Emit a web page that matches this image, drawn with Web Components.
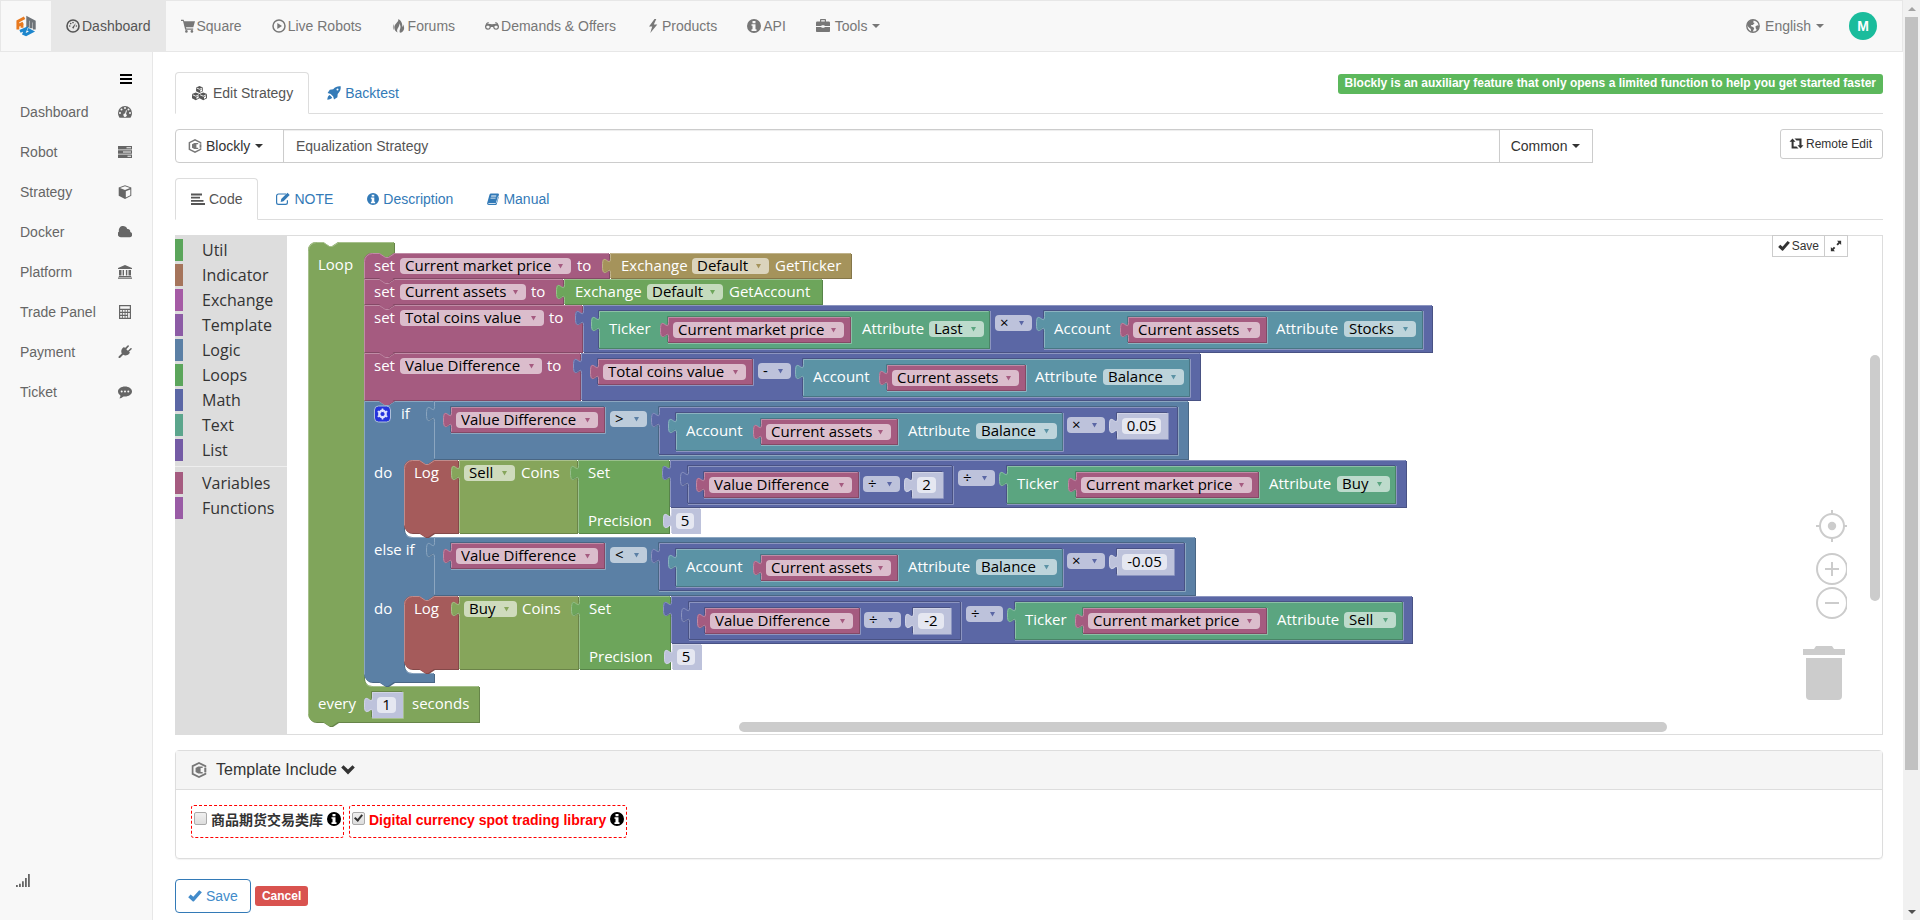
<!DOCTYPE html>
<html lang="en">
<head>
<meta charset="utf-8">
<title>Edit Strategy - Equalization Strategy</title>
<style>
  html, body { margin: 0; min-height: 100vh; background: #fff; }
  body { font: 14px/20px "Liberation Sans", Arial, "Noto Sans CJK SC", sans-serif; color: #333; }
</style>
</head>
<body>
<strategy-app></strategy-app>
<script>
const define = (name, html, setup) => {
  const template = document.createElement('template');
  template.innerHTML = html;
  customElements.define(name, class extends HTMLElement {
    constructor() {
      super();
      this.attachShadow({ mode: 'open' }).append(template.content.cloneNode(true));
    }
    connectedCallback() {
      if (setup && !this.ready) { this.ready = true; setup(this, this.shadowRoot); }
    }
  });
};

/* ---------- icons, all on a 14 x 14 grid ---------- */
const ICONS = {
  logo: '<g fill="none" stroke-width="2"><path stroke="#e8791e" d="M1.300 9.500V3.800L6 1.200M1.300 6.900L5 4.900M4.200 8.200V6"/><path stroke="#6f7479" d="M8.200 8V1.500L12.800 4V9.400M10.500 8.600V3.500"/><path stroke="#1d86cd" d="M2.800 10.800L6.900 9l-1.400 3.400 1.500.6 4.200-2.200-3-1.600"/></g>',
  gauge: '<circle cx="7" cy="7" r="6" fill="none" stroke="currentColor" stroke-width="1.600"/><path d="M6.200 8.500L9.800 4 7.800 9.200A1 1 0 0 1 6.200 8.500Z"/><circle cx="3.700" cy="7" r=".8"/><circle cx="4.700" cy="4.600" r=".8"/><circle cx="7" cy="3.600" r=".8"/><circle cx="10.400" cy="7" r=".8"/>',
  cart: '<path d="M0 .8h2.600l.6 1.500H14l-1.700 6H5l.3 1.200h6.900v1.300H4.200L2 2.100H0Z"/><circle cx="5.400" cy="12.400" r="1.300"/><circle cx="10.900" cy="12.400" r="1.300"/>',
  play: '<circle cx="7" cy="7" r="6" fill="none" stroke="currentColor" stroke-width="1.500"/><path d="M5.300 3.900L10 7l-4.700 3.100Z"/>',
  fire: '<path d="M6.300 0C7 3.200 2.200 4.600 2.300 8.600c0 2.600 1.600 4.400 3.400 5-1.200-2.200-.6-3.600.6-5.200 1.100-1.500 1.200-2.600.8-4.100 1.800 2.300 1.600 4.200.9 6-.5 1.300-.6 2.300 0 3.500C12 13 13.300 8.800 11 5.400c.1 1.200-.1 1.900-.7 2.600C10.500 4.800 9.600 1.600 6.300 0Z"/><path d="M2 5C.5 7 .6 9.500 2 11.200 1.400 9 1.500 7 2 5Z"/>',
  glasses: '<path d="M1.300 4.200C2 3.200 3 3 4 3.400l-.3.900c-.7-.2-1-.1-1.300.4 1.500-.1 3 .1 4.600.6 1.600-.5 3.100-.7 4.600-.6-.3-.5-.6-.6-1.300-.4L10 3.400c1-.4 2-.2 2.700.8L14 7c.1 2.300-.8 3.700-2.900 3.700C9.200 10.700 8.300 9.500 8.100 8H5.900C5.700 9.500 4.800 10.700 2.900 10.700.8 10.700-.1 9.300 0 7ZM3 6.700c-1.200 0-1.700.5-1.700 1.200S1.900 9.400 2.900 9.400 4.600 8.800 4.600 7.900 4.100 6.700 3 6.700Zm8 0c-1.100 0-1.600.4-1.600 1.200s.6 1.500 1.700 1.500 1.600-.7 1.600-1.500S12.200 6.700 11 6.700Z" fill-rule="evenodd"/>',
  bolt: '<path d="M8.500 0L3 7.600h3.200L4.300 14l7-8.600H7.800L10.300 0Z"/>',
  info: '<path fill-rule="evenodd" d="M7 0a7 7 0 1 1 0 14A7 7 0 0 1 7 0ZM5.500 2v2.200h3V2ZM4.500 5.300v1.500h1v3.500h-1v1.600h5v-1.600h-1v-5Z"/>',
  briefcase: '<path fill-rule="evenodd" d="M4 2.500V.8A.8.8 0 0 1 4.800 0h4.400a.8.8 0 0 1 .8.800v1.700h2.800A1.200 1.200 0 0 1 14 3.700V7H8.500v-.8h-3V7H0V3.700a1.200 1.200 0 0 1 1.200-1.200Zm1.200 0h3.600v-1.300H5.200ZM0 8h5.500v.8h3V8H14v4.200a.8.8 0 0 1-.8.800H.8a.8.8 0 0 1-.8-.8Z"/>',
  globe: '<circle cx="7" cy="7" r="6.200" fill="none" stroke="currentColor" stroke-width="1.400"/><path d="M2 3.200L6 .8l2 .8-1 1.700 1.600.8L6.900 6 5 5.900l.4 1.500 1.800.6 1 1.500L6.500 13 5 12.700 4.800 10 2.400 8 1 6ZM9.500 7.200l2-.9 1.800.8-.8 3L11 11.600 9.700 9.300Z"/>',
  bars: '<path d="M1 2h12v2H1zM1 6h12v2H1zM1 10h12v2H1z"/>',
  tachometer: '<path fill-rule="evenodd" d="M7 1a7 7 0 0 1 7 7c0 1.600-.5 3-1.200 4.300-.2.400-.5.500-.8.500H2c-.3 0-.6-.1-.8-.5A8 8 0 0 1 0 8a7 7 0 0 1 7-7ZM2 7a1 1 0 1 0 0 2 1 1 0 0 0 0-2Zm1.500-3.500a1 1 0 1 0 0 2 1 1 0 0 0 0-2ZM7 2a1 1 0 1 0 0 2 1 1 0 0 0 0-2Zm3.500 1.500a1 1 0 1 0 0 2 1 1 0 0 0 0-2ZM12 7a1 1 0 1 0 0 2 1 1 0 0 0 0-2ZM8 5.200L7 8.600a1.600 1.600 0 1 0 1 .3l1-3.400Z"/>',
  server: '<path fill-rule="evenodd" d="M0 1h14v3.400H0ZM8.500 2.200v1H13v-1ZM0 5.300h14v3.400H0ZM5 6.500v1h8v-1ZM0 9.600h14V13H0Zm9.500 1.200v1H13v-1Z"/>',
  cube: '<path fill-rule="evenodd" d="M7 .3L13.300 2.600v8.200L7 13.900.7 10.800V2.600ZM7 1.200L2 3 7 4.900 12 3Z"/><path d="M7.800 6.300l4.500-1.700v5.600L7.800 12.400Z" fill="#f8f8f8"/>',
  cloud: '<path d="M3 12.300A3.200 3.200 0 0 1 1 6.500 4.300 4.300 0 0 1 9.300 4a2.400 2.400 0 0 1 2.900 2.900A2.800 2.800 0 0 1 12 12.300Z"/>',
  bank: '<path d="M7 0l7 3v1H0V3ZM1 5h2.500v5.500H1zM4.600 5H6v5.500H4.600zM7.900 5h1.400v5.500H7.900zM10.500 5H13v5.500h-2.500zM.8 11h12.400v1H.8zM0 12.500h14v1.300H0z"/>',
  calculator: '<path fill-rule="evenodd" d="M1 0h12v14H1ZM2.200 1.200v2.600h9.600V1.200ZM2.200 5v1.800h1.700V5Zm2.600 0v1.800h1.800V5Zm2.700 0v1.800h1.700V5Zm2.600 0v1.800h1.700V5ZM2.200 8v1.800h1.700V8Zm2.600 0v1.800h1.800V8Zm2.700 0v1.800h1.700V8ZM2.200 11v1.800h1.700V11Zm2.600 0v1.800h1.800V11Zm2.700 0v1.800h1.700V11Zm2.600-3v4.800h1.700V8Z"/>',
  plug: '<path d="M13.600 4.200L11 6.800l1 1-1.200 1.200C9.400 10.600 7 10.900 5.200 9.800L2 13H.6v-1.500l3.200-3.100C2.800 6.700 3.300 4.500 4.700 3L6 2l1 1L9.600.4c1-.6 1.700.3 1.200 1.100L8.300 4.200l1.600 1.600 2.600-2.500c.9-.5 1.700.1 1.100.9Z"/>',
  comment: '<path fill-rule="evenodd" d="M7 1.500c3.900 0 7 2.200 7 5s-3.100 5-7 5l-1.500-.1C4 12.700 2.600 13.200 1.200 13.300c.8-.8 1.200-1.600 1.200-2.900C.9 9.400 0 8 0 6.500c0-2.800 3.100-5 7-5ZM3.700 5.500a1 1 0 1 0 0 2 1 1 0 0 0 0-2Zm3.300 0a1 1 0 1 0 0 2 1 1 0 0 0 0-2Zm3.300 0a1 1 0 1 0 0 2 1 1 0 0 0 0-2Z"/>',
  cubes: '<path d="M7 0L10.200 1.300V5L7 6.500 3.800 5V1.300ZM3.500 6L7 7.500v4L3.500 13.300 0 11.500v-4ZM10.500 6L14 7.500v4l-3.500 1.800L7 11.500v-4Z"/><path fill="none" stroke="#fff" stroke-width=".8" d="M4.300 1.900L7 3l2.700-1.100M.6 8.200l2.900 1.300 3-1.300M7.500 8.200l3 1.300 2.900-1.300"/><path fill="#fff" d="M7.700 3.700l1.800-.8v1.700l-1.800.9ZM4.200 10.200L6.200 9.300v1.700l-2 1.100ZM11.200 10.200l1.900-.9v1.700l-1.900 1.100Z"/>',
  rocket: '<path fill-rule="evenodd" d="M13.700.3c.3 3-.4 5.200-3 7.700l-.3 3.300L7 13.400l-.8-3L3.700 7.900.6 7l2.200-3.300 3.400-.4C8.600.6 10.700 0 13.700.3ZM10.500 2.500a1 1 0 1 0 0 2 1 1 0 0 0 0-2ZM2.700 9l2.500 2.400c-.8 1.500-2.500 2-4.900 2.300C.5 11.500 1 9.700 2.700 9Z"/>',
  align: '<path d="M0 1.500h11v1.900H0zM0 4.700h9v1.900H0zM0 7.900h12.500v1.900H0zM0 11.100h14V13H0z"/>',
  edit: '<path fill="none" stroke="currentColor" stroke-width="1.200" d="M10 2H2.500A1.900 1.900 0 0 0 .6 3.900v6.600a1.900 1.900 0 0 0 1.900 1.900h7a1.900 1.900 0 0 0 1.900-1.900V8.200"/><path d="M11.500.7L13.700 3 7.500 9.300l-2.800.6.5-2.800Z"/>',
  book: '<path fill-rule="evenodd" d="M4.200.5h8.600c.9.100 1.300.8 1.100 1.600l-2.600 8.700c-.3.900-.9 1.200-1.600 1.200H2c-.6 0-.6.900.2.900H10l2.900-9.500c.8.300 1 .7.800 1.500L11.300 13c-.3.700-.8 1-1.500 1H2C.7 14-.2 12.900.2 11.700L2.900 2.100C3.100 1.200 3.600.7 4.200.5ZM5 3l-.3 1h5.900l.3-1Zm-.7 2.400L4 6.400h5.900l.3-1Z"/>',
  hex: '<path fill="none" stroke="currentColor" stroke-width="1.500" d="M12.600 4.800V3.600L7 .9 1.400 3.600v6.800L7 13.100l5.600-2.700V9.200"/><path d="M10.200 4H6.300L4 5.300v3.400L6.300 10h3.900V8.700H8.400V5.300h1.800ZM11.600 5.300h1.800v3.400h-1.800z"/>',
  remote: '<path d="M3 1.500l3 3.300H4.100v4.700H7L9 11.500H2.100V4.800H0Zm2 0h7v6.700H14l-3 3.300L8 8.200h1.900V3.500H7Z"/>',
  check: '<path d="M13.900 3.300L6 12.200a1 1 0 0 1-1.400 0L.2 8.200l2.400-2.700 2.700 2.300L11.200 1.200Z"/>',
  resize: '<path d="M8.200 1H13v4.800l-1.600-1.600-2.300 2.300-1.600-1.600 2.300-2.300ZM5.800 13H1V8.200l1.600 1.600 2-2 1.600 1.600-2 2Z"/>',
  chevron: '<path d="M.2 4.600L2.500 2.200 7 6.600l4.500-4.400 2.300 2.400L7 11.600Z"/>',
  signal: '<path d="M0 11h1.800v2H0zM3 9.700h1.800V13H3zM6 7.300h1.800V13H6zM9 4h1.800v9H9zM12 0h1.800v13H12z"/>'
};
define('ui-icon', `<style>
  :host { display: inline-block; flex: none; width: 14px; height: 14px; }
  svg { display: block; width: 100%; height: 100%; fill: currentColor; }
</style><svg viewBox="0 0 14 14" aria-hidden="true"></svg>`, (el, root) => {
  root.querySelector('svg').innerHTML = ICONS[el.getAttribute('name')];
});

define('ui-caret', `<style>
  :host { display: inline-block; border: 4px solid transparent; border-top-color: currentColor; border-bottom: 0; }
</style>`);

/* ---------- top bar ---------- */
define('app-header', `<style>
  :host { display: flex; height: 50px; border: 1px solid #e7e7e7; background: #f8f8f8; color: #777; }
  nav { display: flex; flex: 1; }
  a { display: flex; align-items: center; gap: 2px; padding: 0 15px; color: inherit; text-decoration: none; }
  a.brand { padding: 0 15px; }
  a.brand ui-icon { width: 20px; height: 22px; }
  a.active { background: #e7e7e7; color: #555; }
  a.menu { gap: 5px; }
  .right { display: flex; align-items: center; gap: 10px; padding-right: 25px; }
  .avatar { display: grid; place-items: center; width: 28px; height: 28px; border-radius: 50%;
    background: #1abc9c; color: #fff; font-weight: bold; }
</style>
<nav>
  <a class="brand" href="#home" aria-label="Home"><ui-icon name="logo"></ui-icon></a>
  <a class="active" href="#dashboard"><ui-icon name="gauge"></ui-icon>Dashboard</a>
  <a href="#square"><ui-icon name="cart"></ui-icon>Square</a>
  <a href="#live"><ui-icon name="play"></ui-icon>Live Robots</a>
  <a href="#forums"><ui-icon name="fire"></ui-icon>Forums</a>
  <a href="#demands"><ui-icon name="glasses"></ui-icon>Demands &amp; Offers</a>
  <a href="#products"><ui-icon name="bolt"></ui-icon>Products</a>
  <a href="#api"><ui-icon name="info"></ui-icon>API</a>
  <a class="menu" href="#tools"><ui-icon name="briefcase"></ui-icon>Tools<ui-caret></ui-caret></a>
</nav>
<div class="right">
  <a class="menu" href="#language"><ui-icon name="globe"></ui-icon>English<ui-caret></ui-caret></a>
  <div class="avatar">M</div>
</div>`);

/* ---------- left menu ---------- */
define('side-menu', `<style>
  :host { display: flex; flex-direction: column; box-sizing: border-box; width: 153px; background: #f8f8f8;
    border-right: 1px solid #e7e7e7; color: #666; }
  button { align-self: flex-end; display: flex; margin: 20px 19px 6px; padding: 0; border: 0; background: none; color: #000; }
  a { display: flex; align-items: center; justify-content: space-between; height: 40px; padding: 0 20px;
    color: inherit; text-decoration: none; }
  .signal { margin: auto 0 32px 16px; }
</style>
<button type="button" aria-label="Toggle menu"><ui-icon name="bars"></ui-icon></button>
<a href="#dashboard">Dashboard<ui-icon name="tachometer"></ui-icon></a>
<a href="#robot">Robot<ui-icon name="server"></ui-icon></a>
<a href="#strategy">Strategy<ui-icon name="cube"></ui-icon></a>
<a href="#docker">Docker<ui-icon name="cloud"></ui-icon></a>
<a href="#platform">Platform<ui-icon name="bank"></ui-icon></a>
<a href="#trade">Trade Panel<ui-icon name="calculator"></ui-icon></a>
<a href="#payment">Payment<ui-icon name="plug"></ui-icon></a>
<a href="#ticket">Ticket<ui-icon name="comment"></ui-icon></a>
<ui-icon class="signal" name="signal"></ui-icon>`);

/* ---------- tabs ---------- */
define('tab-bar', `<style>
  :host { display: flex; justify-content: space-between; align-items: flex-start; height: 41px;
    border-bottom: 1px solid #ddd; }
  .tabs { display: flex; gap: 2px; }
</style><div class="tabs"><slot></slot></div><slot name="end"></slot>`);
define('tab-link', `<style>
  :host { display: block; }
  a { display: flex; align-items: center; gap: 4px; box-sizing: border-box; height: 42px; padding: 0 15px;
    border: 1px solid transparent; border-radius: 4px 4px 0 0; color: #337ab7; text-decoration: none; }
  :host([active]) a { border-color: #ddd; border-bottom-color: #fff; background: #fff; color: #555; }
  :host([wide]) ui-icon { width: 17px; height: 15px; }
  :host([wide]) a { gap: 5px; }
  :host([narrow]) ui-icon { width: 12px; }
</style><a href="#tab"><ui-icon></ui-icon><slot></slot></a>`, (el, root) => {
  const icon = document.createElement('ui-icon');
  icon.setAttribute('name', el.getAttribute('icon'));
  root.querySelector('ui-icon').replaceWith(icon);
});

define('text-badge', `<style>
  :host { display: block; padding: 0 7px; height: 20px; border-radius: 3px; background: #5cb85c; color: #fff;
    font: bold 12px/18px "Liberation Sans", Arial, sans-serif; }
</style><slot></slot>`);

/* ---------- name, language and category of the strategy ---------- */
define('strategy-form', `<style>
  :host { display: flex; justify-content: space-between; align-items: flex-start; }
  .group { display: flex; flex: 0 0 83%; height: 34px; }
  .pick { position: relative; display: flex; align-items: center; box-sizing: border-box; border: 1px solid #ccc; color: #333; }
  .pick.type { width: 109px; border-radius: 4px 0 0 4px; }
  .pick.kind { width: 94px; }
  .pick ui-icon { position: absolute; left: 12px; color: #777; pointer-events: none; }
  .pick ui-caret { position: absolute; pointer-events: none; }
  .type ui-caret { right: 20px; }
  .kind ui-caret { right: 12px; }
  select { appearance: none; width: 100%; height: 32px; border: 0; margin: 0; background: none; color: inherit; font: inherit; }
  .type select { padding: 0 0 0 30px; }
  .kind select { padding: 0 0 0 11px; }
  input { flex: 1; min-width: 0; box-sizing: border-box; margin: 0 -1px; padding: 0 12px; border: 1px solid #ccc;
    box-shadow: inset 0 1px 1px #00000013; color: #555; font: inherit; }
  button { display: flex; align-items: center; gap: 2px; height: 30px; padding: 0 10px 0 8px; border: 1px solid #ccc;
    border-radius: 3px; background: #fff; color: #333; font: 12px/18px "Liberation Sans", Arial, sans-serif; }
  button ui-icon { width: 15px; }
</style>
<div class="group">
  <div class="pick type"><ui-icon name="hex"></ui-icon>
    <select aria-label="Strategy type"><option>Blockly</option></select><ui-caret></ui-caret></div>
  <input aria-label="Strategy name" value="Equalization Strategy">
  <div class="pick kind"><select aria-label="Category"><option>Common</option></select><ui-caret></ui-caret></div>
</div>
<button type="button"><ui-icon name="remote"></ui-icon>Remote Edit</button>`);

/* ---------- block categories ---------- */
define('block-toolbox', `<style>
  :host { display: block; box-sizing: border-box; width: 112px; padding-top: 4px; background: #ddd;
    font: 16px/22px "Open Sans", "Noto Sans", sans-serif; color: #333; }
  ul { margin: 0; padding: 0; list-style: none; }
  li { height: 22px; margin-bottom: 3px; padding-left: 19px; border-left: 8px solid var(--hue); }
  hr { height: 0; margin: 5px 0; border: 0; border-top: 1px solid #eee; }
</style>
<ul>
  <li style="--hue:#5ba55b">Util</li><li style="--hue:#a5745b">Indicator</li><li style="--hue:#a55ba5">Exchange</li>
  <li style="--hue:#8c5ba5">Template</li><li style="--hue:#5b80a5">Logic</li><li style="--hue:#5ba55b">Loops</li>
  <li style="--hue:#5b67a5">Math</li><li style="--hue:#5ba58c">Text</li><li style="--hue:#745ba5">List</li>
</ul>
<hr>
<ul><li style="--hue:#a55b80">Variables</li><li style="--hue:#995ba5">Functions</li></ul>`);

/* ---------- the block canvas ---------- */
const C = { loop: '#80a55b', variable: '#a55b80', gold: '#a5935b', green: '#6da55b', math: '#5b67a5', ticker: '#5ba580',
  account: '#5b93a5', logic: '#5b80a5', log: '#a55b5b', coins: '#86a55b', number: '#bdc2db' };
const mix = (hex, to, k) => '#' + [1, 3, 5].map(i => {
  const v = parseInt(hex.slice(i, i + 2), 16);
  return Math.round(v + (to - v) * k).toString(16).padStart(2, '0');
}).join('');
const light = c => mix(c, 255, .3);
/* constant blocks have no shaded edge */
const dark = c => c === C.number ? c : mix(c, 0, .2);
const NOTCH = 'l6,4 3,0 6,-4', NOTCH_BACK = 'l-6,4 -3,0 -6,-4', TAB_UP = 'c0,-10 -8,8 -8,-7.5 s8,2.5 8,-7.5';

/* canvas coordinates of the top left corner of the visible area */
const VIEW = { x: 176, y: 236 };

class Program {
  constructor() { this.shapes = ''; this.fields = ''; }
  draw(d, edge, c) {
    this.shapes += `<path d="${d}" fill="${dark(c)}" transform="translate(1,1)"/><path d="${d}" fill="${c}"/>` +
      `<path d="${edge}" fill="none" stroke="${light(c)}" transform="translate(.5,.5)"/>`;
  }
  /* a block that plugs into a value input; "into" is the colour of the block around it */
  value(x, y, r, b, c, into) {
    if (into) this.shapes += `<path d="M${x - .5},${b}V${y - .5}H${r}" fill="none" stroke="${dark(into)}"/>` +
      `<path d="M${x},${b + 1.500}H${r + 1.500}V${y}" fill="none" stroke="${light(into)}"/>`;
    const left = `V${y + 20}${TAB_UP}V${y}`;
    this.draw(`M${x},${b}${left}H${r}V${b}Z`, `M${x},${b - 1}${left}H${r - 1}`, c);
    if (into) this.shapes += `<path d="M${x},${b + .5}H${r + .5}V${y}" fill="none" stroke="${dark(c)}"/>`;
  }
  statement(x, y, r, b, c, round) {
    const top = (round ? `V${y + 8}a8,8 0 0 1 8,-8` : `V${y}`) + `H${x + 15}${NOTCH}`;
    const bottom = `H${x + 30}${NOTCH_BACK}` + (round === 'both' ? `H${x + 8}a8,8 0 0 1 -8,-8` : `H${x}`);
    const low = round === 'both' ? b - 8 : b;
    this.draw(`M${x},${low}${top}H${r}V${b}${bottom}Z`, `M${x},${low}${top}H${r - 1}`, c);
  }
  box(kind, x, y, w, inner) {
    this.fields += `<${kind} style="left:${x - VIEW.x}px;top:${y - 5 - VIEW.y}px${w ? `;width:${w}px` : ''}"${inner}`;
  }
  text(x, y, s) { this.box('span', x, y, 0, `>${s}</span>`); }
  select(x, y, r, s, c) {
    this.shapes += `<rect x="${x}" y="${y}" width="${r - x}" height="16" rx="4" fill="${mix(c, 255, .6)}"/>` +
      `<path d="M${r - 13},${y + 6}h5l-2.500,4.500z" fill="${c}"/>`;
    this.box('select', x, y, r - x, ` aria-label="${s}"><option>${s}</option></select>`);
  }
  variable(x, y, r, s, into) {
    this.value(x, y, r, y + 25, C.variable, into);
    this.select(x + 5, y + 5, r - 6, s, C.variable);
  }
  number(x, y, r, s, into) {
    this.value(x, y, r, y + 25, C.number, into);
    this.shapes += `<rect x="${x + 5}" y="${y + 5}" width="${r - x - 11}" height="16" rx="4" fill="#e5e7f1"/>`;
    this.box('input', x + 5, y + 5, r - x - 11, ` aria-label="Number" value="${s}">`);
  }
  /* Ticker / Account reader: label, variable, attribute */
  reader(x, y, r, c, name, vx, vr, variable, ax, fx, fr, attr) {
    this.value(x, y, r, y + 37, c, C.math);
    this.text(x + 10, y + 10, name);
    this.variable(vx, y + 6, vr, variable, c);
    this.text(ax, y + 10, 'Attribute');
    this.select(fx, y + 10, fr, attr, c);
  }
}

function buildProgram() {
  const p = new Program();
  p.draw(`M308,250a8,8 0 0 1 8,-8H323${NOTCH}H394V253${NOTCH_BACK}h-7a8,8 0 0 0 -8,8V678a8,8 0 0 0 8,8H479V722H338${NOTCH_BACK}H316a8,8 0 0 1 -8,-8Z`,
    `M308,714V250a8,8 0 0 1 8,-8H323${NOTCH}H393M366,684a8,8 0 0 0 6,2H478`, C.loop);
  p.text(318, 257, 'Loop');
  p.text(318, 696, 'every');
  p.number(372, 692, 402, '1', C.loop);
  p.text(412, 696, 'seconds');

  p.draw(`M364,401H379${NOTCH}H434V460${NOTCH_BACK}h-7a8,8 0 0 0 -8,8V529a8,8 0 0 0 8,8H434V596${NOTCH_BACK}h-7a8,8 0 0 0 -8,8V665a8,8 0 0 0 8,8H434V682H394${NOTCH_BACK}H372a8,8 0 0 1 -8,-8Z`,
    `M364,674V401H379${NOTCH}H433M406,535a8,8 0 0 0 6,2H434M406,671a8,8 0 0 0 6,2H433`, C.logic);

  p.statement(364, 353, 580, 400, C.variable);
  p.statement(364, 305, 582, 352, C.variable);
  p.statement(364, 279, 563, 304, C.variable);
  p.statement(364, 253, 609, 278, C.variable, 'top');
  const notchFill = (x, y, c) => { p.shapes += `<path d="M${x + 15},${y}${NOTCH}z" fill="${c}"/>`; };
  [279, 305, 353, 401].forEach(y => notchFill(364, y, C.variable));

  p.text(374, 258, 'set'); p.select(400, 258, 571, 'Current market price', C.variable); p.text(577, 258, 'to');
  p.value(610, 253, 851, 278, C.gold);
  p.text(621, 258, 'Exchange'); p.select(692, 258, 769, 'Default', C.gold); p.text(775, 258, 'GetTicker');

  p.text(374, 284, 'set'); p.select(400, 284, 526, 'Current assets', C.variable); p.text(531, 284, 'to');
  p.value(564, 279, 822, 304, C.green);
  p.text(575, 284, 'Exchange'); p.select(647, 284, 723, 'Default', C.green); p.text(729, 284, 'GetAccount');

  p.text(374, 310, 'set'); p.select(400, 310, 544, 'Total coins value', C.variable); p.text(549, 310, 'to');
  p.value(583, 305, 1432, 352, C.math);
  p.reader(599, 311, 989, C.ticker, 'Ticker', 668, 850, 'Current market price', 862, 929, 984, 'Last');
  p.select(995, 315, 1032, '×', C.math);
  p.reader(1044, 311, 1422, C.account, 'Account', 1128, 1266, 'Current assets', 1276, 1344, 1416, 'Stocks');

  p.text(374, 358, 'set'); p.select(400, 358, 542, 'Value Difference', C.variable); p.text(547, 358, 'to');
  p.value(581, 353, 1200, 400, C.math);
  p.variable(598, 359, 752, 'Total coins value', C.math);
  p.select(758, 363, 791, '-', C.math);
  p.reader(803, 359, 1189, C.account, 'Account', 887, 1025, 'Current assets', 1035, 1103, 1184, 'Balance');

  p.shapes += `<rect x="374.500" y="406" width="16" height="16" rx="4" fill="#2533dc" stroke="#aebfd9"/>
    <circle cx="382.500" cy="414" r="3.400" fill="none" stroke="#dfe3ff" stroke-width="2"/>
    <path d="M382.500 408.500v11M377.700 411.200l9.600 5.600M377.700 416.800l9.600-5.600" stroke="#dfe3ff" stroke-width="1.600"/>
    <circle cx="382.500" cy="414" r="2" fill="#2533dc"/>`;

  const branches = [
    { y: 401, word: 'if', wx: 401, op: '&gt;', right: 1188, mr: 1177, nr: 1167, n: '0.05',
      side: 'Sell', sr: 515, cx: 521, set: 579, mathR: 1406, inR: 952, d: 0, two: '2', tx: 912, tr: 942,
      dx: 958, rx: 1007, rr: 1395, vx: 1076, vr: 1258, ax: 1269, fx: 1337, fr: 1390, attr: 'Buy' },
    { y: 537, word: 'else if', wx: 374, op: '&lt;', right: 1195, mr: 1184, nr: 1173, n: '-0.05',
      side: 'Buy', sr: 517, cx: 522, set: 580, mathR: 1412, inR: 960, d: 1, two: '-2', tx: 913, tr: 950,
      dx: 966, rx: 1015, rr: 1402, vx: 1083, vr: 1266, ax: 1277, fx: 1344, fr: 1396, attr: 'Sell' }
  ];
  for (const b of branches) {
    const y = b.y, m = y + 59, s = b.set, e = 671 + b.d;
    p.text(b.wx, y + 5, b.word);
    p.value(434, y, b.right, y + 58, C.logic);
    p.variable(451, y + 6, 604, 'Value Difference', C.logic);
    p.select(610, y + 10, 647, b.op, C.logic);
    p.value(659, y + 6, b.mr, y + 53, C.math, C.logic);
    p.reader(676, y + 12, 1062, C.account, 'Account', 761, 897, 'Current assets', 908, 976, 1057, 'Balance');
    p.select(1067, y + 16, 1105, '×', C.math);
    p.number(1117, y + 12, b.nr, b.n, C.math);

    p.text(374, m + 5, 'do');
    p.statement(404, m, 458, m + 73, C.log, 'both');
    p.text(414, m + 5, 'Log');
    p.value(459, m, s - 2, m + 73, C.coins);
    p.select(464, m + 5, b.sr, b.side, C.coins);
    p.text(b.cx, m + 5, 'Coins');
    p.value(s - 1, m, e - 2, m + 73, C.green);
    p.text(s + 9, m + 5, 'Set');
    p.text(s + 9, m + 53, 'Precision');
    p.value(e - 1, m, b.mathR, m + 47, C.math);
    p.value(e + 17, m + 6, b.inR, m + 43, C.math, C.math);
    p.variable(704 + b.d, m + 12, 858 + b.d, 'Value Difference', C.math);
    p.select(863 + b.d, m + 16, 900 + b.d, '÷', C.math);
    p.number(b.tx, m + 12, b.tr, b.two, C.math);
    p.select(b.dx, m + 10, b.dx + 37, '÷', C.math);
    p.reader(b.rx, m + 6, b.rr, C.ticker, 'Ticker', b.vx, b.vr, 'Current market price', b.ax, b.fx, b.fr, b.attr);
    p.number(e, m + 48, e + 29, '5');
  }
  notchFill(364, 401, C.variable);
  return p;
}

define('block-canvas', `<style>
  :host { display: block; position: relative; overflow: hidden; font: 15px/24px "Open Sans", "Noto Sans", sans-serif; }
  svg { position: absolute; left: 0; top: 0; width: 100%; height: 100%; }
  span, select, input { position: absolute; box-sizing: border-box; height: 24px; margin: 0; border: 0; padding: 0;
    background: none; font: inherit; white-space: pre; }
  span { color: #fff; }
  select { appearance: none; padding-left: 5px; color: #000; }
  input { color: #000; text-align: center; }
</style><svg aria-hidden="true"></svg><div id="fields"></div>`, (el, root) => {
  const p = buildProgram();
  root.querySelector('svg').innerHTML = `<g transform="translate(${-VIEW.x},${-VIEW.y})">${p.shapes}</g>`;
  root.getElementById('fields').innerHTML = p.fields;
});

define('block-workspace', `<style>
  :host { display: block; position: relative; box-sizing: border-box; height: 500px; border: 1px solid #ddd; }
  block-canvas { height: 100%; }
  block-toolbox { position: absolute; left: -1px; top: -1px; bottom: -1px; }
  .tools { position: absolute; right: 34px; top: -1px; display: flex; }
  .tools button { display: flex; align-items: center; gap: 2px; height: 22px; margin-left: -1px; padding: 0 5px; border: 1px solid #ccc;
    background: #fff; color: #333; font: 12px/18px "Liberation Sans", Arial, sans-serif; }
  .tools ui-icon { width: 12px; height: 12px; }
  .bar { position: absolute; border-radius: 5px; background: #ccc; }
  .bar.h { left: 563px; right: 215px; bottom: 2px; height: 10px; }
  .bar.v { right: 2px; top: 119px; width: 10px; height: 246px; }
  .view { position: absolute; right: 35px; bottom: 33px; width: 48px; }
</style>
<block-canvas></block-canvas>
<block-toolbox></block-toolbox>
<div class="tools">
  <button type="button"><ui-icon name="check"></ui-icon>Save</button>
  <button type="button" aria-label="Full screen"><ui-icon name="resize"></ui-icon></button>
</div>
<svg class="view" viewBox="0 0 48 192" fill="none" stroke="#ccc" stroke-width="2" aria-hidden="true">
  <circle cx="33" cy="17" r="12"/><circle cx="33" cy="17" r="4.200" fill="#ccc" stroke="none"/>
  <path d="M33 1v4M33 29v4M17 17h4M45 17h4"/>
  <circle cx="33" cy="60" r="15"/><path d="M26 60h14M33 53v14"/>
  <circle cx="33" cy="94" r="15"/><path d="M26 94h14"/>
  <g fill="#ccc" stroke="none"><path d="M4 140h11l2-3h16l2 3h11v6H4zM7 149h36v38a4 4 0 0 1-4 4H11a4 4 0 0 1-4-4z"/></g>
</svg>
<div class="bar h"></div><div class="bar v"></div>`);

/* ---------- templates ---------- */
define('template-option', `<style>
  :host { display: flex; align-items: flex-start; box-sizing: border-box; height: 33px; padding: 4px 2px; border: 1px dashed red; border-radius: 3px;
    font-weight: bold; }
  label { display: flex; align-items: flex-start; gap: 4px; line-height: 20px; }
  input { appearance: none; position: relative; box-sizing: border-box; width: 13px; height: 13px; margin: 2px 0 0; border: 1px solid #aaa; border-radius: 2px;
    background: linear-gradient(#f0f0f0, #ddd); }
  input:checked::before { content: ""; position: absolute; left: 3px; top: 0; width: 3px; height: 6px;
    border: solid #333; border-width: 0 2px 2px 0; transform: rotate(40deg); }
  ui-icon { margin: 2px 0 0 4px; color: #000; }
</style><label><input type="checkbox"><slot></slot></label><ui-icon name="info"></ui-icon>`, (el, root) => {
  root.querySelector('input').checked = el.hasAttribute('checked');
});

define('template-panel', `<style>
  :host { display: block; border: 1px solid #ddd; border-radius: 4px; box-shadow: 0 1px 1px #0000000d; }
  header { display: flex; align-items: center; height: 38px; padding: 0 15px; border-bottom: 1px solid #ddd; background: #f5f5f5; }
  header ui-icon { width: 16px; height: 16px; color: #777; }
  header ui-icon:last-child { width: 14px; height: 14px; margin-left: 4px; color: #333; }
  h3 { margin: 0 0 0 9px; font: 16px/20px "Liberation Sans", Arial, sans-serif; }
  .body { display: flex; gap: 5px; padding: 15px 15px 20px; }
  .on { color: red; }
</style>
<header><ui-icon name="hex"></ui-icon><h3>Template Include</h3><ui-icon name="chevron"></ui-icon></header>
<div class="body">
  <template-option>商品期货交易类库</template-option>
  <template-option class="on" checked>Digital currency spot trading library</template-option>
</div>`);

define('form-actions', `<style>
  :host { display: flex; align-items: center; gap: 4px; }
  button { border: 0; font: bold 12px/20px "Liberation Sans", Arial, sans-serif; }
  .save { display: flex; align-items: center; gap: 4px; height: 34px; padding: 0 12px; border: 1px solid #337ab7; border-radius: 4px;
    background: #fff; color: #428bca; font: inherit; }
  .cancel { height: 20px; padding: 0 7px; border-radius: 3px; background: #d9534f; color: #fff; }
</style>
<button class="save" type="button"><ui-icon name="check"></ui-icon>Save</button>
<button class="cancel" type="button">Cancel</button>`);

define('page-scrollbar', `<style>
  :host { display: flex; flex-direction: column; align-items: center; box-sizing: border-box; width: 17px; height: 100vh; background: #f1f1f1; }
  i { flex: none; margin: 7px 0 6px; border: 4px solid transparent; }
  .up { border-top: 0; border-bottom-color: #a3a3a3; }
  .down { border-bottom: 0; border-top-color: #505050; }
  .track { flex: 1; width: 13px; }
  .thumb { height: 85%; background: #c1c1c1; }
</style><i class="up"></i><div class="track"><div class="thumb"></div></div><i class="down"></i>`);

define('strategy-app', `<style>
  :host { display: grid; grid-template: auto 1fr / 153px minmax(0, 1fr) 17px; min-height: 100vh; }
  app-header { grid-column: 1 / 3; }
  page-scrollbar { grid-area: 1 / 3 / 3 / 4; }
  side-menu { grid-area: 2 / 1; }
  main { grid-area: 2 / 2; display: flex; flex-direction: column; gap: 15px; padding: 20px 20px 5px 22px; }
  text-badge { margin-top: 2px; }
  form-actions { margin-top: 5px; }
</style>
<app-header></app-header>
<side-menu></side-menu>
<main>
  <tab-bar>
    <tab-link active wide icon="cubes">Edit Strategy</tab-link>
    <tab-link icon="rocket">Backtest</tab-link>
    <text-badge slot="end">Blockly is an auxiliary feature that only opens a limited function to help you get started faster</text-badge>
  </tab-bar>
  <strategy-form></strategy-form>
  <tab-bar>
    <tab-link active icon="align">Code</tab-link>
    <tab-link icon="edit">NOTE</tab-link>
    <tab-link narrow icon="info">Description</tab-link>
    <tab-link narrow icon="book">Manual</tab-link>
  </tab-bar>
  <block-workspace></block-workspace>
  <template-panel></template-panel>
  <form-actions></form-actions>
</main>
<page-scrollbar></page-scrollbar>`);
</script>
</body>
</html>
